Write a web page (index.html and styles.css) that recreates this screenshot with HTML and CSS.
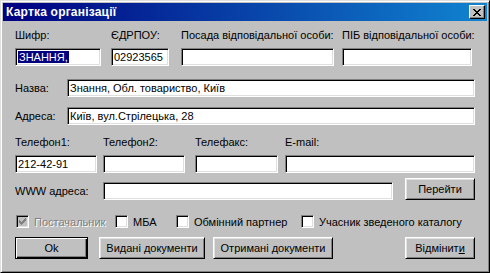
FILE: index.html
```html
<!DOCTYPE html>
<html lang="uk">

<head>
    <meta charset="UTF-8">
    <meta name="viewport" content="width=device-width, initial-scale=1.0">
    <title>Картка організації</title>
    <link rel="stylesheet" href="styles.css">
</head>

<body>
    <div class="window">
        <div class="titlebar">
            <span class="title">Картка організації</span>
            <span class="close">
                <svg width="8" height="7" viewBox="0 0 8 7">
                    <path d="M0 0h2v1h1v1h2V1h1V0h2v1H7v1H6v1H5v1h1v1h1v1h1v1H6V6H5V5H3v1H2v1H0V6h1V5h1V4h1V3H2V2H1V1H0z" fill="#000"/>
                </svg>
            </span>
        </div>

        <div class="content">
            <div class="row top-row">
                <div class="field w-code">
                    <span class="label">Шифр:</span>
                    <div class="input"><span class="selected">ЗНАННЯ,</span></div>
                </div>
                <div class="field w-edrpou">
                    <span class="label">ЄДРПОУ:</span>
                    <div class="input">02923565</div>
                </div>
                <div class="field w-post">
                    <span class="label">Посада відповідальної особи:</span>
                    <div class="input"></div>
                </div>
                <div class="field w-pib">
                    <span class="label">ПІБ відповідальної особи:</span>
                    <div class="input"></div>
                </div>
            </div>

            <div class="row line name-row">
                <span class="label side">Назва:</span>
                <div class="input grow">Знання, Обл. товариство, Київ</div>
            </div>

            <div class="row line addr-row">
                <span class="label side">Адреса:</span>
                <div class="input grow">Київ, вул.Стрілецька, 28</div>
            </div>

            <div class="row phone-row">
                <div class="field w-tel1">
                    <span class="label">Телефон1:</span>
                    <div class="input">212-42-91</div>
                </div>
                <div class="field w-tel2">
                    <span class="label">Телефон2:</span>
                    <div class="input"></div>
                </div>
                <div class="field w-fax">
                    <span class="label">Телефакс:</span>
                    <div class="input"></div>
                </div>
                <div class="field grow">
                    <span class="label">E-mail:</span>
                    <div class="input"></div>
                </div>
            </div>

            <div class="row www-row">
                <span class="label side wide">WWW адреса:</span>
                <div class="input grow"></div>
                <button class="btn go">Перейти</button>
            </div>

            <div class="row checks">
                <div class="check-item w-c1 disabled">
                    <span class="check">
                        <svg width="7" height="7" viewBox="0 0 7 7">
                            <path d="M6 0h1v3H6v1H5v1H4v1H3v1H2V6H1V5H0V2h1v1h1v1h1V3h1V2h1V1h1z" fill="#808080"/>
                        </svg>
                    </span>
                    <span>Постачальник</span>
                </div>
                <div class="check-item w-c2">
                    <span class="check"></span>
                    <span>МБА</span>
                </div>
                <div class="check-item w-c3">
                    <span class="check"></span>
                    <span>Обмінний партнер</span>
                </div>
                <div class="check-item">
                    <span class="check"></span>
                    <span>Учасник зведеного каталогу</span>
                </div>
            </div>

            <div class="row buttons">
                <button class="btn default w-ok">Ok</button>
                <button class="btn w-issued">Видані документи</button>
                <button class="btn w-received">Отримані документи</button>
                <button class="btn w-cancel">Відмінит<u>и</u></button>
            </div>
        </div>
    </div>
</body>

</html>
```

FILE: styles.css
```css
body {
    margin: 0;
    font-family: 'Liberation Sans', Arial, sans-serif;
    font-size: 11px;
    color: #000;
    background: #c0c0c0;
}

.window {
    width: 490px;
    height: 273px;
    box-sizing: border-box;
    background: #c0c0c0;
    border: 1px solid;
    border-color: #dfdfdf #000 #000 #dfdfdf;
    box-shadow: inset 1px 1px #fff, inset -1px -1px #808080;
    padding: 2px;
}

.titlebar {
    height: 18px;
    display: flex;
    align-items: center;
    justify-content: space-between;
    padding: 0 2px 0 3px;
    background: linear-gradient(to right, #000080, #1084d0);
}

.title {
    color: #fff;
    font-weight: bold;
    font-size: 12px;
    letter-spacing: 0.2px;
}

.close {
    width: 16px;
    height: 14px;
    box-sizing: border-box;
    display: flex;
    align-items: center;
    justify-content: center;
    background: #c0c0c0;
    border: 1px solid;
    border-color: #fff #000 #000 #fff;
    box-shadow: inset -1px -1px #808080;
}

.content {
    padding: 8px 12px 0 12px;
}

.row {
    display: flex;
}

.field {
    display: flex;
    flex-direction: column;
}

.label {
    line-height: 13px;
    white-space: nowrap;
}

.field .label {
    margin-bottom: 6px;
}

.input {
    height: 18px;
    box-sizing: border-box;
    background: #fff;
    border: 1px solid;
    border-color: #808080 #fff #fff #808080;
    box-shadow: inset 1px 1px #000, inset -1px -1px #dfdfdf;
    padding: 0 2px;
    line-height: 16px;
    white-space: nowrap;
    overflow: hidden;
}

.grow {
    flex: 1;
}

.selected {
    background: #000080;
    color: #fff;
    padding: 0 1px;
}

/* верхній ряд */
.w-code {
    width: 86px;
    margin-right: 10px;
}

.w-edrpou {
    width: 58px;
    margin-right: 12px;
}

.w-post {
    width: 153px;
    margin-right: 8px;
}

.w-pib {
    width: 130px;
}

.line {
    align-items: center;
}

.side {
    width: 52px;
    line-height: 18px;
}

.side.wide {
    width: 88px;
}

.name-row {
    margin-top: 13px;
}

.addr-row {
    margin-top: 10px;
}

.phone-row {
    margin-top: 11px;
}

.w-tel1 {
    width: 82px;
    margin-right: 6px;
}

.w-tel2 {
    width: 82px;
    margin-right: 10px;
}

.w-fax {
    width: 83px;
    margin-right: 7px;
}

.www-row {
    margin-top: 5px;
    align-items: flex-end;
}

.www-row .input {
    margin-right: 12px;
}

/* кнопки */
.btn {
    height: 22px;
    box-sizing: border-box;
    padding: 0;
    font: inherit;
    color: #000;
    background: #c0c0c0;
    border: 1px solid;
    border-color: #fff #000 #000 #fff;
    box-shadow: inset 1px 1px #dfdfdf, inset -1px -1px #808080;
}

.btn.default {
    border-color: #000;
    box-shadow: inset 1px 1px #fff, inset -1px -1px #000, inset -2px -2px #808080;
}

.go {
    width: 70px;
}

.checks {
    margin-top: 15px;
    align-items: center;
    height: 13px;
}

.check-item {
    display: flex;
    align-items: center;
    gap: 5px;
    white-space: nowrap;
}

.check {
    width: 13px;
    height: 13px;
    box-sizing: border-box;
    display: flex;
    align-items: center;
    justify-content: center;
    background: #fff;
    border: 1px solid;
    border-color: #808080 #fff #fff #808080;
    box-shadow: inset 1px 1px #000, inset -1px -1px #dfdfdf;
}

.w-c1 {
    width: 99px;
    margin-left: 1px;
}

.w-c2 {
    width: 61px;
}

.w-c3 {
    width: 125px;
}

.disabled {
    color: #808080;
    text-shadow: 1px 1px #fff;
}

.disabled .check {
    background: #c0c0c0;
}

.buttons {
    margin-top: 9px;
}

.w-ok {
    width: 73px;
    margin-right: 11px;
}

.w-issued {
    width: 106px;
    margin-right: 8px;
}

.w-received {
    width: 120px;
}

.w-cancel {
    width: 70px;
    margin-left: auto;
}
```
